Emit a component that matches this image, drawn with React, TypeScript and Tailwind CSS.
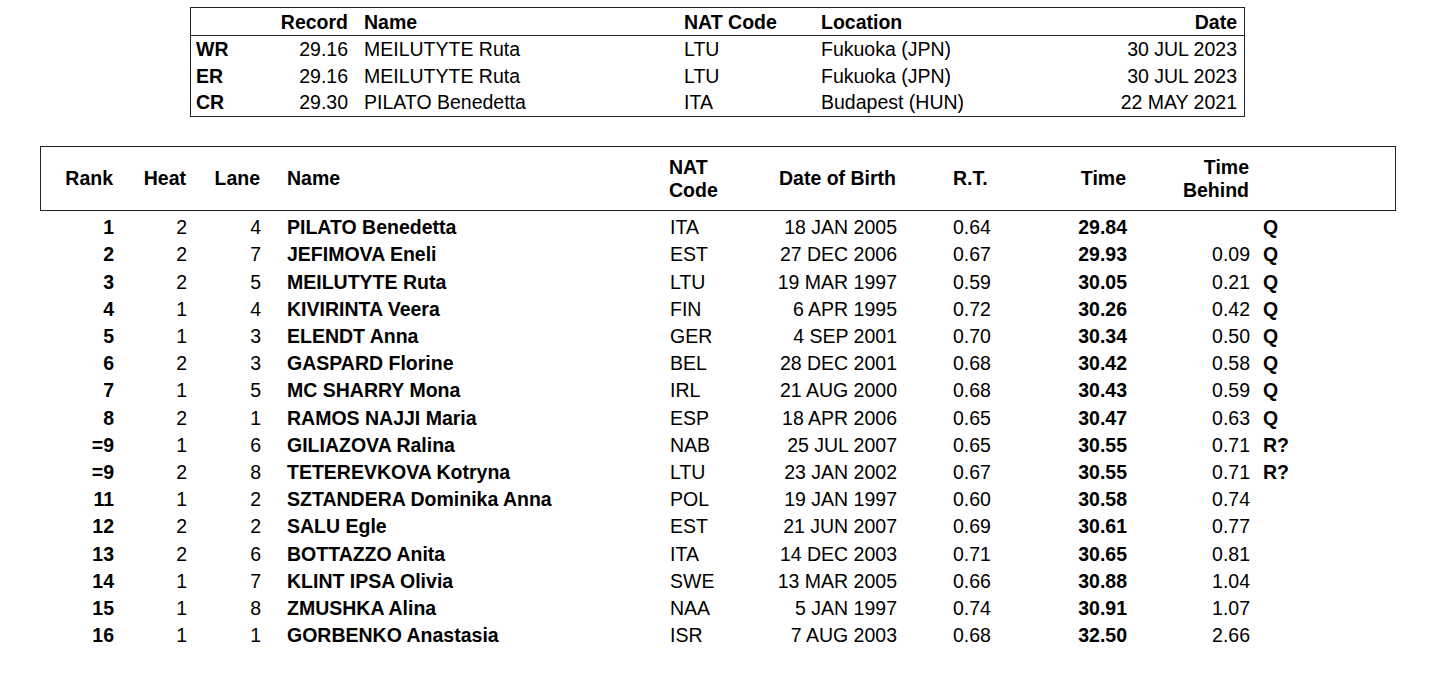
import React from "react";

const records = [
  ["WR", "29.16", "MEILUTYTE Ruta", "LTU", "Fukuoka (JPN)", "30 JUL 2023"],
  ["ER", "29.16", "MEILUTYTE Ruta", "LTU", "Fukuoka (JPN)", "30 JUL 2023"],
  ["CR", "29.30", "PILATO Benedetta", "ITA", "Budapest (HUN)", "22 MAY 2021"],
];

const rows = [
  ["1", "2", "4", "PILATO Benedetta", "ITA", "18 JAN 2005", "0.64", "29.84", "", "Q"],
  ["2", "2", "7", "JEFIMOVA Eneli", "EST", "27 DEC 2006", "0.67", "29.93", "0.09", "Q"],
  ["3", "2", "5", "MEILUTYTE Ruta", "LTU", "19 MAR 1997", "0.59", "30.05", "0.21", "Q"],
  ["4", "1", "4", "KIVIRINTA Veera", "FIN", "6 APR 1995", "0.72", "30.26", "0.42", "Q"],
  ["5", "1", "3", "ELENDT Anna", "GER", "4 SEP 2001", "0.70", "30.34", "0.50", "Q"],
  ["6", "2", "3", "GASPARD Florine", "BEL", "28 DEC 2001", "0.68", "30.42", "0.58", "Q"],
  ["7", "1", "5", "MC SHARRY Mona", "IRL", "21 AUG 2000", "0.68", "30.43", "0.59", "Q"],
  ["8", "2", "1", "RAMOS NAJJI Maria", "ESP", "18 APR 2006", "0.65", "30.47", "0.63", "Q"],
  ["=9", "1", "6", "GILIAZOVA Ralina", "NAB", "25 JUL 2007", "0.65", "30.55", "0.71", "R?"],
  ["=9", "2", "8", "TETEREVKOVA Kotryna", "LTU", "23 JAN 2002", "0.67", "30.55", "0.71", "R?"],
  ["11", "1", "2", "SZTANDERA Dominika Anna", "POL", "19 JAN 1997", "0.60", "30.58", "0.74", ""],
  ["12", "2", "2", "SALU Egle", "EST", "21 JUN 2007", "0.69", "30.61", "0.77", ""],
  ["13", "2", "6", "BOTTAZZO Anita", "ITA", "14 DEC 2003", "0.71", "30.65", "0.81", ""],
  ["14", "1", "7", "KLINT IPSA Olivia", "SWE", "13 MAR 2005", "0.66", "30.88", "1.04", ""],
  ["15", "1", "8", "ZMUSHKA Alina", "NAA", "5 JAN 1997", "0.74", "30.91", "1.07", ""],
  ["16", "1", "1", "GORBENKO Anastasia", "ISR", "7 AUG 2003", "0.68", "32.50", "2.66", ""],
];

const topGrid = "grid grid-cols-[86px_72px_336px_137px_270px_146px] items-center";
const mainGrid =
  "grid grid-cols-[74px_73px_74px_409px_90px_137px_143px_87px_123px_1fr] items-center";

export default function App() {
  return (
    <div
      className="w-[1434px] h-[694px] bg-white text-black text-[19.5px] leading-[23px] overflow-hidden whitespace-nowrap"
      style={{ fontFamily: '"Liberation Sans", Arial, sans-serif' }}
    >
      {/* Records table */}
      <div className="ml-[190px] mt-[7px] w-[1055px] border border-[#222]">
        <div className={`${topGrid} h-[28px] pt-[1px] border-b border-[#222] font-bold ml-[-1px]`}>
          <div></div>
          <div className="text-right">Record</div>
          <div className="pl-[16px]">Name</div>
          <div>NAT Code</div>
          <div>Location</div>
          <div className="text-right">Date</div>
        </div>
        {records.map((r) => (
          <div key={r[0]} className={`${topGrid} h-[26.6px] pt-[1px] ml-[-1px]`}>
            <div className="pl-[6px] font-bold">{r[0]}</div>
            <div className="text-right">{r[1]}</div>
            <div className="pl-[16px]">{r[2]}</div>
            <div>{r[3]}</div>
            <div>{r[4]}</div>
            <div className="text-right">{r[5]}</div>
          </div>
        ))}
      </div>

      {/* Results */}
      <div className="ml-[40px] mt-[29px] w-[1356px]">
        <div className="h-[65px] border border-[#222] flex items-center">
          <div className={`${mainGrid} w-full ml-[-2px] pt-[1px] font-bold`}>
            <div className="text-right">Rank</div>
            <div className="text-right">Heat</div>
            <div className="text-right">Lane</div>
            <div className="pl-[27px]">Name</div>
            <div>
              NAT
              <br />
              Code
            </div>
            <div className="text-right">Date of Birth</div>
            <div className="pl-[57px]">R.T.</div>
            <div className="text-right">Time</div>
            <div className="text-right">
              Time
              <br />
              Behind
            </div>
            <div></div>
          </div>
        </div>
        <div className="pt-[3.4px]">
          {rows.map((r, i) => (
            <div key={i} className={`${mainGrid} h-[27.2px]`}>
              <div className="text-right font-bold">{r[0]}</div>
              <div className="text-right">{r[1]}</div>
              <div className="text-right">{r[2]}</div>
              <div className="pl-[26px] font-bold">{r[3]}</div>
              <div>{r[4]}</div>
              <div className="text-right">{r[5]}</div>
              <div className="pl-[56px]">{r[6]}</div>
              <div className="text-right font-bold">{r[7]}</div>
              <div className="text-right">{r[8]}</div>
              <div className="pl-[13px] font-bold">{r[9]}</div>
            </div>
          ))}
        </div>
      </div>
    </div>
  );
}
